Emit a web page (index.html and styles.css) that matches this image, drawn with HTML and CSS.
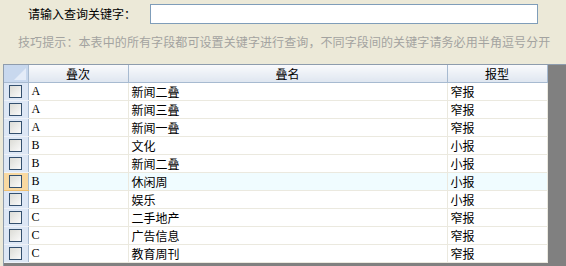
FILE: index.html
```html
<!DOCTYPE html>
<html lang="zh-CN">
<head>
    <meta charset="UTF-8">
    <title>叠次查询</title>
    <link rel="stylesheet" href="styles.css">
</head>
<body>
    <div class="search-bar">
        <label for="keyword">请输入查询关键字：</label>
        <input type="text" id="keyword" autofocus>
    </div>
    <div class="hint">技巧提示：本表中的所有字段都可设置关键字进行查询，不同字段间的关键字请务必用半角逗号分开</div>

    <div class="grid">
        <table>
            <colgroup>
                <col class="col-check">
                <col class="col-code">
                <col class="col-name">
                <col class="col-type">
            </colgroup>
            <thead>
                <tr>
                    <th class="corner"></th>
                    <th>叠次</th>
                    <th>叠名</th>
                    <th>报型</th>
                </tr>
            </thead>
            <tbody>
                <tr><td class="row-head"><span class="box"></span></td><td class="code">A</td><td>新闻二叠</td><td>窄报</td></tr>
                <tr><td class="row-head"><span class="box"></span></td><td class="code">A</td><td>新闻三叠</td><td>窄报</td></tr>
                <tr><td class="row-head"><span class="box"></span></td><td class="code">A</td><td>新闻一叠</td><td>窄报</td></tr>
                <tr><td class="row-head"><span class="box"></span></td><td class="code">B</td><td>文化</td><td>小报</td></tr>
                <tr><td class="row-head"><span class="box"></span></td><td class="code">B</td><td>新闻二叠</td><td>小报</td></tr>
                <tr class="current"><td class="row-head"><span class="box"></span></td><td class="code">B</td><td>休闲周</td><td>小报</td></tr>
                <tr><td class="row-head"><span class="box"></span></td><td class="code">B</td><td>娱乐</td><td>小报</td></tr>
                <tr><td class="row-head"><span class="box"></span></td><td class="code">C</td><td>二手地产</td><td>窄报</td></tr>
                <tr><td class="row-head"><span class="box"></span></td><td class="code">C</td><td>广告信息</td><td>窄报</td></tr>
                <tr><td class="row-head"><span class="box"></span></td><td class="code">C</td><td>教育周刊</td><td>窄报</td></tr>
            </tbody>
        </table>
    </div>
</body>
</html>
```

FILE: styles.css
```css
body {
    margin: 0;
    background-color: #ece9d8;
    font-family: "Noto Sans CJK SC", sans-serif;
    font-size: 12px;
    color: #000;
    overflow: hidden;
}

.search-bar {
    display: flex;
    align-items: center;
    padding: 4px 0 0 28px;
}

.search-bar label {
    width: 122px;
    line-height: 20px;
}

.search-bar input {
    width: 388px;
    height: 20px;
    box-sizing: border-box;
    border: 1px solid #7f9db9;
    margin: 0;
    padding: 0 2px;
    font-size: 12px;
    outline: none;
}

.hint {
    margin: 10px 0 0 18px;
    line-height: 16px;
    letter-spacing: 0.1px;
    color: #a3a3a0;
    white-space: nowrap;
}

.grid {
    margin: 14px 0 0 3px;
    height: 210px;
    background-color: #808080;
    border-top: 1px solid #8e9cad;
    border-left: 1px solid #8e9cad;
}

table {
    border-collapse: collapse;
    table-layout: fixed;
    width: 543px;
    background-color: #fff;
}

.col-check { width: 24px; }
.col-code { width: 100px; }
.col-name { width: 319px; }
.col-type { width: 100px; }

th {
    height: 17px;
    padding: 0;
    font-weight: normal;
    line-height: 17px;
    text-align: center;
    background: linear-gradient(#f9fafc, #dfe6f0);
    border-right: 1px solid #a7bad0;
    border-bottom: 1px solid #a7bad0;
}

th.corner {
    position: relative;
    background: #c8d8ee;
}

th.corner::after {
    content: "";
    position: absolute;
    right: 2px;
    bottom: 2px;
    border-left: 12px solid transparent;
    border-bottom: 12px solid #e4ecf8;
}

td {
    height: 17px;
    padding: 0 0 0 3px;
    line-height: 17px;
    white-space: nowrap;
    border-right: 1px solid #ebe9df;
    border-bottom: 1px solid #ebe9df;
}

td.code {
    font-family: "Liberation Serif", serif;
    font-size: 12px;
}

td.row-head {
    padding: 0;
    background-color: #dde7f5;
    border-right: 1px solid #a7bad0;
    border-bottom: 1px solid #eef2f8;
    text-align: center;
}

.box {
    display: block;
    width: 11px;
    height: 11px;
    margin: 0 auto;
    border: 1px solid #34506e;
    background: linear-gradient(135deg, #dcdcd6, #fafafa);
}

tr.current td {
    background-color: #f0fcff;
}

tr.current td.row-head {
    background-color: #f9d9a1;
    border-bottom-color: #f0c070;
}
```
